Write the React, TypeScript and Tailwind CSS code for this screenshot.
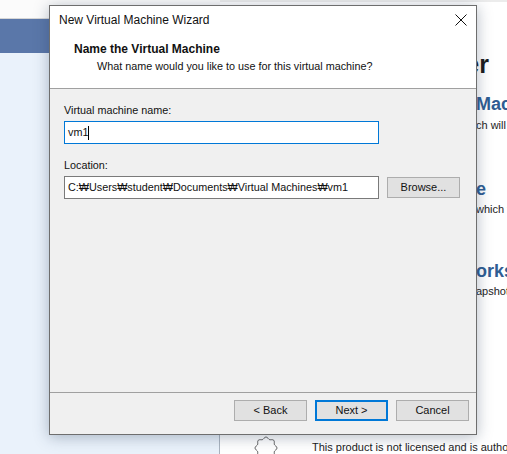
import React from "react";

const font = { fontFamily: '"Liberation Sans", Arial, sans-serif' };

function WinButton({ label, primary }: { label: string; primary?: boolean }) {
  return (
    <button
      className={
        "w-[73px] h-[21px] bg-[#e1e1e1] text-[11px] text-[#111] leading-none " +
        (primary ? "border-2 border-[#0078d7]" : "border border-[#adadad]")
      }
    >
      {label}
    </button>
  );
}

function Seal() {
  const pts: string[] = [];
  for (let i = 0; i <= 96; i++) {
    const a = (i / 96) * Math.PI * 2;
    const r = 10 + 0.9 * Math.cos(a * 8);
    pts.push(`${(12 + r * Math.cos(a)).toFixed(2)},${(12 + r * Math.sin(a)).toFixed(2)}`);
  }
  return (
    <svg width="24" height="24" viewBox="0 0 24 24" className="shrink-0">
      <polyline points={pts.join(" ")} fill="none" stroke="#555" strokeWidth="1" />
    </svg>
  );
}

// a line whose start is hidden behind the dialog; tail starts at x = 476
function Line({ head, tail, cls, mt }: { head: string; tail: string; cls: string; mt: string }) {
  return (
    <div className={"flex whitespace-nowrap " + cls + " " + mt}>
      <div className="w-[256px] shrink-0 flex justify-end">
        <span>{head}</span>
      </div>
      <span>{tail}</span>
    </div>
  );
}

export default function App() {
  return (
    <div className="relative w-[507px] h-[454px] overflow-hidden bg-white" style={font}>
      {/* background app */}
      <div className="flex flex-col h-full">
        <div className="h-[19px] flex">
          <div className="w-[220px] shrink-0 bg-[#fbfbfb] border-b border-[#d6d6d6]" />
          <div className="flex-1 bg-white border-t-2 border-[#ececec]" />
        </div>
        <div className="flex flex-1">
          <div className="w-[220px] shrink-0 bg-[#eaf2fb] border-r border-[#a9b3bf] flex flex-col">
            <div className="h-[34px] bg-[#5a77a9]" />
          </div>
          <div className="flex-1 min-w-0 overflow-hidden flex flex-col bg-white">
            <div className="flex flex-col text-[#222]">
              <div className="w-[269px] flex justify-end whitespace-nowrap mt-[30px] text-[25px] font-bold leading-[30px] text-[#1b1b1b]">
                <span>VMware Workstation Player</span>
              </div>
              <Line head="Create a New Virtual " tail="Machine" mt="mt-[14px]" cls="text-[18px] font-bold text-[#2f5d93] leading-[22px]" />
              <Line head="Create a new virtual machine, whi" tail="ch will then be added" mt="mt-[3px]" cls="text-[11px] leading-[14px]" />
              <Line head="Open a Virtual Machin" tail="e" mt="mt-[46px]" cls="text-[18px] font-bold text-[#2f5d93] leading-[22px]" />
              <Line head="Open an existing virtual machine, " tail="which will then be added" mt="mt-[2px]" cls="text-[11px] leading-[14px]" />
              <Line head="Upgrade to VMware W" tail="orkstation Pro" mt="mt-[44px]" cls="text-[18px] font-bold text-[#2f5d93] leading-[22px]" />
              <Line head="Get advanced features such as sn" tail="apshots" mt="mt-[2px]" cls="text-[11px] leading-[14px]" />
            </div>
            <div className="mt-auto h-[20px] flex items-start pl-[34px] gap-[34px]">
              <div className="pt-[2px]">
                <Seal />
              </div>
              <span className="text-[11px] text-[#1a1a1a] whitespace-nowrap pt-[6px] leading-[14px]">
                This product is not licensed and is authorized for non-commercial use only.
              </span>
            </div>
          </div>
        </div>
      </div>

      {/* wizard dialog */}
      <div className="absolute left-[49px] top-[5px] w-[428px] h-[430px] border border-[#6e6e6e] bg-[#f0f0f0] flex flex-col shadow-[0_2px_14px_rgba(40,60,90,0.35)]">
        <div className="bg-white h-[82px] flex flex-col border-b border-[#a0a0a0] box-content">
          <div className="h-[28px] flex items-center justify-between pl-[9px] pr-[9px]">
            <span className="text-[12px] text-[#111]">New Virtual Machine Wizard</span>
            <svg width="12" height="12" viewBox="0 0 12 12">
              <path d="M0.5 0.5 L11.5 11.5 M11.5 0.5 L0.5 11.5" stroke="#111" strokeWidth="1" />
            </svg>
          </div>
          <div className="pl-[24px] mt-[8px] text-[12px] font-bold text-[#111] leading-[14px]">Name the Virtual Machine</div>
          <div className="pl-[47px] mt-[3px] text-[10.8px] text-[#111] leading-[14px]">
            What name would you like to use for this virtual machine?
          </div>
        </div>

        <div className="flex-1 flex flex-col pt-[14px] pl-[14px] text-[10.8px] text-[#111]">
          <div className="leading-[14px]">Virtual machine name:</div>
          <div className="mt-[4px] w-[315px] h-[23px] bg-white border border-[#0078d7] flex items-center pl-[3px]">
            <span>vm1</span>
            <span className="w-px h-[14px] bg-black" />
          </div>
          <div className="mt-[14px] leading-[14px]">Location:</div>
          <div className="mt-[4px] flex items-center gap-[8px]">
            <div className="w-[315px] h-[23px] bg-white border border-[#7a7a7a] flex items-center pl-[3px] whitespace-nowrap">
              C:₩Users₩student₩Documents₩Virtual Machines₩vm1
            </div>
            <WinButton label="Browse..." />
          </div>
        </div>

        <div className="h-[34px] border-t border-[#a0a0a0] box-content flex justify-end items-start pt-[7px] pr-[7px] gap-[8px]">
          <WinButton label="< Back" />
          <WinButton label="Next >" primary />
          <WinButton label="Cancel" />
        </div>
      </div>
    </div>
  );
}
